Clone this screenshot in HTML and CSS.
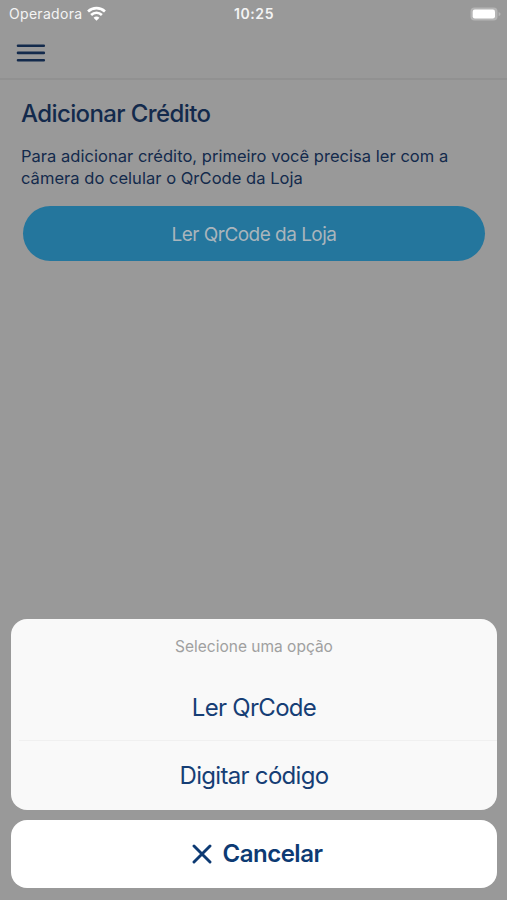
FILE: index.html
```
<!DOCTYPE html>
<html lang="pt-BR">
<head>
  <meta charset="UTF-8">
  <meta name="viewport" content="width=device-width, initial-scale=1.0">
  <title>Adicionar Crédito</title>
  <link rel="stylesheet" href="styles.css">
</head>
<body>

<div class="screen">
  <div class="status-bar">
    <div class="carrier">
      <span class="carrier-name">Operadora</span>
      <svg class="wifi" width="19" height="15" viewBox="0 0 18 14" fill="none" stroke="#fff" stroke-width="2.5">
        <path d="M1 5.1C5.4 .9 12.6 .9 17 5.1"/>
        <path d="M3.9 8.4C6.8 5.6 11.2 5.6 14.1 8.4"/>
        <path d="M9 13.8L6.2 11C7.8 9.5 10.2 9.5 11.8 11Z" fill="#fff" stroke="none"/>
      </svg>
    </div>
    <span class="clock">10:25</span>
    <svg class="battery" width="31" height="14" viewBox="0 0 31 14">
      <rect x=".5" y=".5" width="27" height="13" rx="4" fill="#b5b5b5"/>
      <rect x="2.7" y="2.5" width="22.3" height="9" rx="2.2" fill="#fff"/>
      <path d="M28.6 4.9C31.2 5.9 31.2 8.1 28.6 9.1Z" fill="#b5b5b5"/>
    </svg>
  </div>

  <header class="toolbar">
    <button class="menu-btn" aria-label="Menu">
      <svg width="30" height="20" viewBox="0 0 30 20" stroke="#132a4c" stroke-width="2.6" stroke-linecap="round">
        <path d="M2 2.7H27.8M2 9.9H27.8M2 17.2H27.8"/>
      </svg>
    </button>
  </header>

  <main class="content">
    <h1>Adicionar Crédito</h1>
    <p>Para adicionar crédito, primeiro você precisa ler com a<br>câmera do celular o QrCode da Loja</p>
    <button class="btn">Ler QrCode da Loja</button>
  </main>

  <div class="action-sheet">
    <div class="sheet-group">
      <div class="sheet-title">Selecione uma opção</div>
      <button class="sheet-option">Ler QrCode</button>
      <div class="divider"></div>
      <button class="sheet-option">Digitar código</button>
    </div>
    <button class="sheet-cancel">
      <svg width="20" height="20" viewBox="0 0 20 20" stroke="#0d3a73" stroke-width="2.9" stroke-linecap="round">
        <path d="M2 2L18 18M18 2L2 18"/>
      </svg>
      <span>Cancelar</span>
    </button>
  </div>
</div>

</body>
</html>
```

FILE: styles.css
```
* {
  box-sizing: border-box;
}
body {
  margin: 0;
  font-family: Inter, "Liberation Sans", sans-serif;
  background: #999;
}
button {
  padding: 0;
  border: none;
  background: none;
  font-family: inherit;
  cursor: pointer;
}
.screen {
  display: flex;
  flex-direction: column;
  height: 900px;
  overflow: hidden;
}

/* Status bar */
.status-bar {
  display: grid;
  grid-template-columns: 1fr auto 1fr;
  align-items: center;
  height: 27px;
  padding: 0 6px 0 9px;
  color: #f4f4f4;
}
.carrier {
  display: flex;
  align-items: center;
  gap: 5px;
}
.carrier-name {
  font-size: 14px;
  letter-spacing: 0.3px;
}
.clock {
  margin-right: 2px;
  font-size: 14px;
  font-weight: 600;
  letter-spacing: 0.6px;
}
.battery {
  justify-self: end;
}

.toolbar {
  display: flex;
  align-items: center;
  height: 53px;
  padding-left: 16px;
  border-bottom: 2px solid #919191;
}
.menu-btn svg {
  display: block;
}

.content {
  padding: 0 21px;
  color: #132a4c;
}
h1 {
  margin: 18px 0 0;
  font-size: 24px;
  font-weight: 500;
  line-height: 32px;
  letter-spacing: -0.6px;
}
p {
  margin: 15px 0 0;
  font-size: 16.5px;
  line-height: 22px;
  letter-spacing: 0.03px;
  white-space: nowrap;
}
.btn {
  display: block;
  width: 462px;
  height: 55px;
  margin: 17px 0 0 2px;
  padding-top: 1px;
  border-radius: 28px;
  background: #24769d;
  color: #aab5bc;
  font-size: 19px;
  letter-spacing: -0.53px;
}

/* Action sheet */
.action-sheet {
  display: flex;
  flex-direction: column;
  gap: 10px;
  margin-top: auto;
  padding: 0 10px 12px 11px;
}
.sheet-group {
  height: 191px;
  border-radius: 16px;
  background: #f9f9f9;
  overflow: hidden;
}
.sheet-title {
  height: 54px;
  color: #a0a0a0;
  font-size: 15.5px;
  line-height: 55px;
  text-align: center;
}
.sheet-option {
  display: block;
  width: 100%;
  height: 67px;
  padding-top: 1px;
  color: #163e75;
  font-size: 24px;
  letter-spacing: -0.7px;
}
.divider {
  height: 1px;
  margin-left: 8px;
  background: #f0f0f0;
}
.sheet-cancel {
  display: flex;
  align-items: center;
  justify-content: center;
  gap: 11px;
  height: 68px;
  padding: 0 0 1px 6px;
  border-radius: 16px;
  background: #fff;
  color: #0d3a73;
  font-size: 24px;
  font-weight: 600;
  letter-spacing: -0.5px;
}
```
